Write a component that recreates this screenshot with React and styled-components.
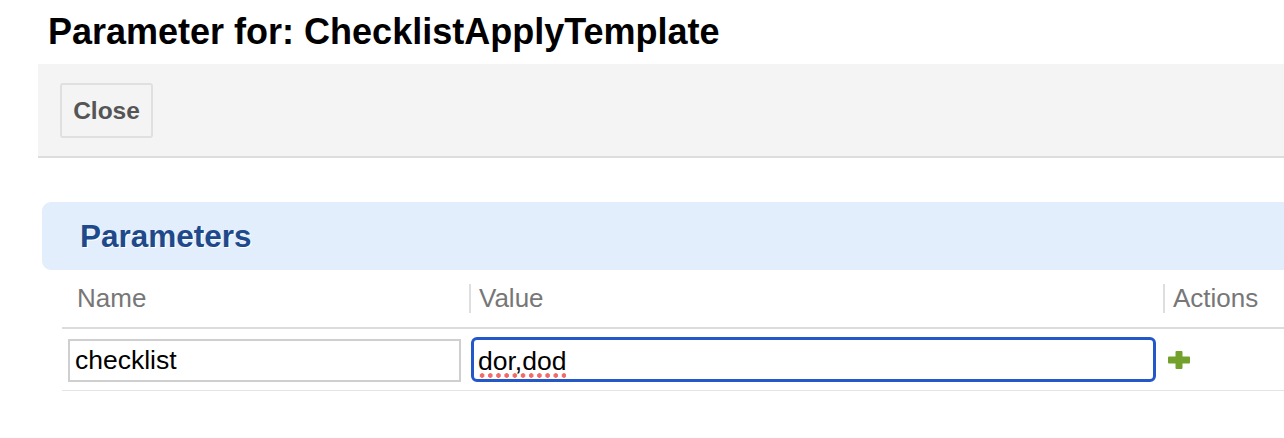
import styled, { createGlobalStyle } from 'styled-components';

const GlobalStyle = createGlobalStyle`
  body {
    margin: 0;
    background: #fff;
    font-family: "Liberation Sans", Arial, sans-serif;
  }
`;

const Page = styled.div`
  width: 1284px;
  height: 438px;
  overflow: hidden;
`;

const Title = styled.h1`
  margin: 0;
  padding: 12px 0 0 48px;
  height: 64px;
  box-sizing: border-box;
  font-size: 36px;
  font-weight: bold;
  color: #000;
  line-height: 40px;
`;

const Toolbar = styled.div`
  margin-left: 38px;
  height: 94px;
  box-sizing: border-box;
  background: #f4f4f4;
  border-bottom: 2px solid #dddddd;
  padding: 19px 0 0 22px;
`;

const Button = styled.button`
  width: 93px;
  height: 55px;
  background: #f4f4f4;
  border: 2px solid #e0e0e0;
  border-radius: 3px;
  font-family: "Liberation Sans", Arial, sans-serif;
  font-size: 24.5px;
  font-weight: bold;
  color: #555;
  padding: 0;
`;

const Panel = styled.div`
  margin: 44px 0 0 42px;
  height: 68px;
  background: #e2eefb;
  border-radius: 9px 0 0 9px;
  display: flex;
  align-items: center;
  padding-left: 38px;
`;

const PanelTitle = styled.h2`
  margin: 0;
  font-size: 31.5px;
  font-weight: bold;
  color: #1e4a8c;
  text-shadow: 1px 1px 0 #fff;
`;

const Table = styled.div`
  margin-left: 62px;
  display: grid;
  grid-template-columns: 407px 694px 1fr;
`;

const HeadCell = styled.div`
  height: 57px;
  display: flex;
  align-items: center;
  padding-left: ${(p) => (p.$sep ? '10px' : '15px')};
  border-bottom: 2px solid #dcdcdc;
  font-size: 26px;
  color: #777;
  position: relative;
  ${(p) =>
    p.$sep &&
    `
    &::before {
      content: '';
      position: absolute;
      left: 0;
      top: 14px;
      height: 29px;
      border-left: 2px solid #dedede;
    }
  `}
`;

const Cell = styled.div`
  height: 62px;
  display: flex;
  align-items: center;
  padding-left: ${(p) => p.$pad || 0}px;
  border-bottom: 1px solid #e4e4e4;
  box-sizing: border-box;
`;

const TextInput = styled.input`
  box-sizing: border-box;
  width: ${(p) => p.$w}px;
  height: 43px;
  margin-top: 2px;
  border: 2px solid #cfcfcf;
  padding: 0 5px;
  font-family: "Liberation Sans", Arial, sans-serif;
  font-size: 26.5px;
  color: #000;
  outline: none;
  background: #fff;
`;

const ValueBox = styled.div`
  box-sizing: border-box;
  width: 685px;
  height: 45px;
  border: 3px solid #2458c8;
  border-radius: 6px;
  padding: 0 4px;
  display: flex;
  align-items: center;
  font-size: 26.5px;
  color: #000;
  background: #fff;
`;

/* spell-check squiggle: a row of round red dots under the word */
const Misspelled = styled.span`
  display: inline-block;
  line-height: 30px;
  margin-top: 4px;
  padding-bottom: 2px;
  background-image: radial-gradient(circle, #f06a6a 2px, rgba(240, 106, 106, 0) 2.6px);
  background-size: 8.2px 5px;
  background-repeat: repeat-x;
  background-position: 0 100%;
`;

const AddIcon = () => (
  <svg width="22" height="18" viewBox="0 0 22 18">
    <path
      d="M7.5 1 Q7.5 0 8.5 0 H13.5 Q14.5 0 14.5 1 V5.5 H21 Q22 5.5 22 6.5 V11.5 Q22 12.5 21 12.5 H14.5 V17 Q14.5 18 13.5 18 H8.5 Q7.5 18 7.5 17 V12.5 H1 Q0 12.5 0 11.5 V6.5 Q0 5.5 1 5.5 H7.5 Z"
      fill="#74a12c"
    />
  </svg>
);

export default function App() {
  return (
    <Page>
      <GlobalStyle />
      <Title>Parameter for: ChecklistApplyTemplate</Title>
      <Toolbar>
        <Button>Close</Button>
      </Toolbar>
      <Panel>
        <PanelTitle>Parameters</PanelTitle>
      </Panel>
      <Table>
        <HeadCell>Name</HeadCell>
        <HeadCell $sep>Value</HeadCell>
        <HeadCell $sep>Actions</HeadCell>
        <Cell $pad={6}>
          <TextInput $w={393} defaultValue="checklist" readOnly />
        </Cell>
        <Cell $pad={2}>
          <ValueBox>
            <Misspelled>dor,dod</Misspelled>
          </ValueBox>
        </Cell>
        <Cell $pad={5}>
          <AddIcon />
        </Cell>
      </Table>
    </Page>
  );
}
